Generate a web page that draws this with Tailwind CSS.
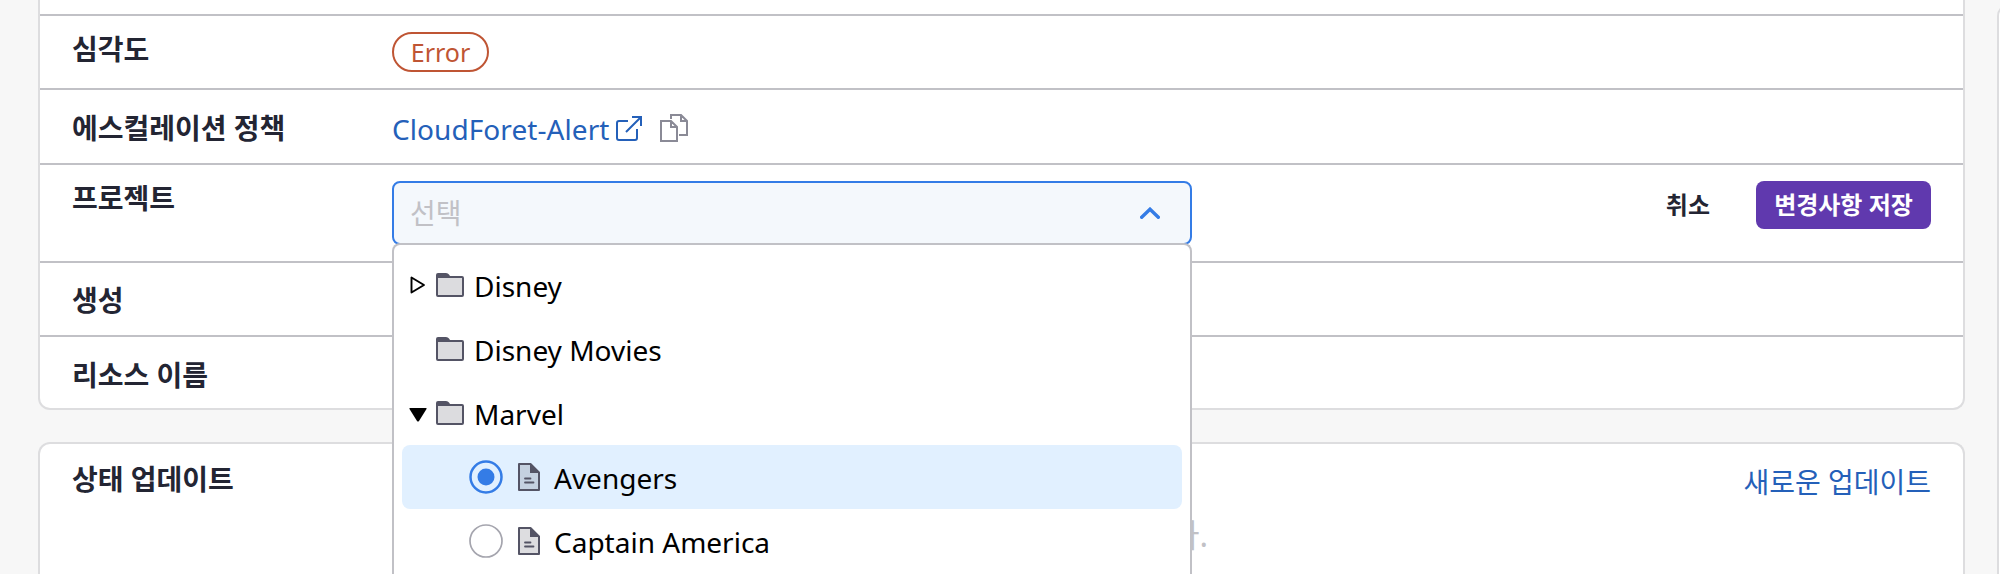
<!DOCTYPE html>
<html lang="ko">
<head>
<meta charset="utf-8">
<title>Alert</title>
<script src="https://cdn.jsdelivr.net/npm/@tailwindcss/browser@4"></script>
</head>
<body class="h-[574px] w-[2000px] overflow-hidden bg-[#f7f7f7] font-['Noto_Sans','Noto_Sans_CJK_KR',sans-serif] text-[28px] leading-[40px] text-[#232533]">
<svg class="hidden">
  <symbol id="folder" viewBox="0 0 28 24"><path d="M0 2Q0 0 2 0H10Q12 0 13 1.5L14 3H26Q28 3 28 5V22Q28 24 26 24H2Q0 24 0 22Z" fill="#545465"/><path d="M2 5H26V22H2Z" fill="#dcdcdf"/></symbol>
  <symbol id="doc" viewBox="0 0 22 28"><path d="M1 1H12.5L21 9.5V27H1Z" fill="#545465" fill-opacity=".2" stroke="#545465" stroke-width="2" stroke-linejoin="round"/><path d="M12 1L21 10H12Z" fill="#545465"/><path d="M7 15.5H12.5M7 19.5H15.5" stroke="#545465" stroke-width="1.8" stroke-linecap="round"/></symbol>
</svg>
<div class="flex h-[574px] overflow-hidden">
  <main class="ml-[38px] flex h-[574px] w-[1927px] shrink-0 flex-col gap-8">
    <section class="h-[410px] shrink-0 rounded-b-xl border-2 border-t-0 border-[#dddddf] bg-white font-bold">
      <div class="h-4 border-b-2 border-[#c1c1c6]"></div>
      <div class="flex h-[74px] border-b-2 border-[#c1c1c6] pl-8">
        <div class="w-80 pt-[13px]">심각도</div>
        <div class="mt-4 flex h-10 w-[97px] items-center justify-center rounded-full border-2 border-[#bf5534] text-[25px] font-normal text-[#bf5534]">Error</div>
      </div>
      <div class="flex h-[75px] border-b-2 border-[#c1c1c6] pl-8">
        <div class="w-80 pt-[18px]">에스컬레이션 정책</div>
        <div class="flex pt-[19px] font-normal text-[#2460b9]"><span class="tracking-[0.07px]">CloudForet-Alert</span>
          <svg class="mt-[6px] ml-[6px] h-7 w-7" viewBox="0 0 28 28" fill="none" stroke="#2460b9" stroke-width="2"><path d="M13 6H4Q2 6 2 8V23Q2 25 4 25H20Q22 25 22 23V14M17 2H26V11M26 2L11 17"/></svg>
          <svg class="mt-[5px] ml-[17px] h-7 w-7" viewBox="0 0 28 28" fill="none" stroke="#8a8a96" stroke-width="2"><path d="M11 5V1H21L27 7V21H19M21 1V7H27M1 7H11L17 13V27H1ZM11 7V13H17"/></svg>
        </div>
      </div>
      <div class="flex h-[98px] border-b-2 border-[#c1c1c6] pr-8 pl-8">
        <div class="w-80 pt-[13px]">프로젝트</div>
        <div class="relative mt-4 h-16 w-[800px] font-normal">
          <div class="flex h-16 items-center justify-between rounded-lg border-2 border-[#347ce6] bg-[#f4f8fc] pr-[30px] pl-4 text-[#c1c1c6]">
            <span>선택</span>
            <svg class="h-3 w-5" viewBox="0 0 20 12" fill="none" stroke="#347ce6" stroke-width="3.4" stroke-linecap="round"><path d="M1.7 10.2L10 2.2L18.3 10.2"/></svg>
          </div>
          <div class="absolute top-[62px] left-0 z-10 h-[331px] w-[800px] rounded-t-lg border-2 border-b-0 border-[#c1c1c6] bg-white px-2 pt-2 text-black">
            <div class="flex h-16 items-center pl-2">
              <svg class="h-[18px] w-4" viewBox="0 0 16 18" fill="none" stroke="#000" stroke-width="1.9" stroke-linejoin="round"><path d="M1.5 1.5V16.5L14 9Z"/></svg>
              <svg class="ml-[10px] h-6 w-7"><use href="#folder"/></svg>
              <span class="ml-[10px] pt-[2px]">Disney</span>
            </div>
            <div class="flex h-16 items-center pl-[34px]">
              <svg class="h-6 w-7"><use href="#folder"/></svg>
              <span class="ml-[10px] pt-[2px]">Disney Movies</span>
            </div>
            <div class="flex h-16 items-center pl-[7px]">
              <svg class="mt-[3px] h-[14px] w-[18px]" viewBox="0 0 18 14"><path d="M1 0H17Q18 0 17.5 1L10 13Q9 14 8 13L.5 1Q0 0 1 0Z"/></svg>
              <svg class="ml-[9px] h-6 w-7"><use href="#folder"/></svg>
              <span class="ml-[10px] pt-[2px]">Marvel</span>
            </div>
            <div class="flex h-16 items-center rounded-lg bg-[#e1f0ff] pl-[67px]">
              <svg class="h-[34px] w-[34px]" viewBox="0 0 34 34"><circle cx="17" cy="17" r="15.5" fill="none" stroke="#347ce6" stroke-width="2.5"/><circle cx="17" cy="17" r="8.5" fill="#347ce6"/></svg>
              <svg class="ml-[15px] h-7 w-[22px]"><use href="#doc"/></svg>
              <span class="ml-[14px] pt-[2px]">Avengers</span>
            </div>
            <div class="flex h-16 items-center pl-[67px]">
              <svg class="h-[34px] w-[34px]" viewBox="0 0 34 34"><circle cx="17" cy="17" r="16" fill="none" stroke="#a5a5ae" stroke-width="1.7"/></svg>
              <svg class="ml-[15px] h-7 w-[22px]"><use href="#doc"/></svg>
              <span class="ml-[14px] pt-[2px]">Captain America</span>
            </div>
          </div>
        </div>
        <div class="mt-4 ml-auto flex h-12 items-center text-2xl">
          <span class="mr-[46px]">취소</span>
          <span class="flex h-12 w-[175px] items-center justify-center rounded-lg bg-[#6039ae] text-white">변경사항 저장</span>
        </div>
      </div>
      <div class="h-[74px] border-b-2 border-[#c1c1c6] pt-[17px] pl-8">생성</div>
      <div class="pt-[18px] pl-8">리소스 이름</div>
    </section>
    <section class="min-h-0 flex-1 rounded-t-xl border-2 border-b-0 border-[#dddddf] bg-white">
      <div class="flex items-start justify-between pt-[15px] pr-8 pl-8">
        <span class="font-bold">상태 업데이트</span>
        <span class="mt-[3px] text-[#2460b9]">새로운 업데이트</span>
      </div>
      <div class="mt-[13px] w-[1168px] text-right text-[32px] text-[#c1c1c6]">상태 업데이트가 없습니다.</div>
    </section>
  </main>
  <aside class="mt-1 ml-8 h-[570px] w-40 shrink-0 rounded-tl-xl border-2 border-b-0 border-[#dddddf] bg-white"></aside>
</div>
</body>
</html>
